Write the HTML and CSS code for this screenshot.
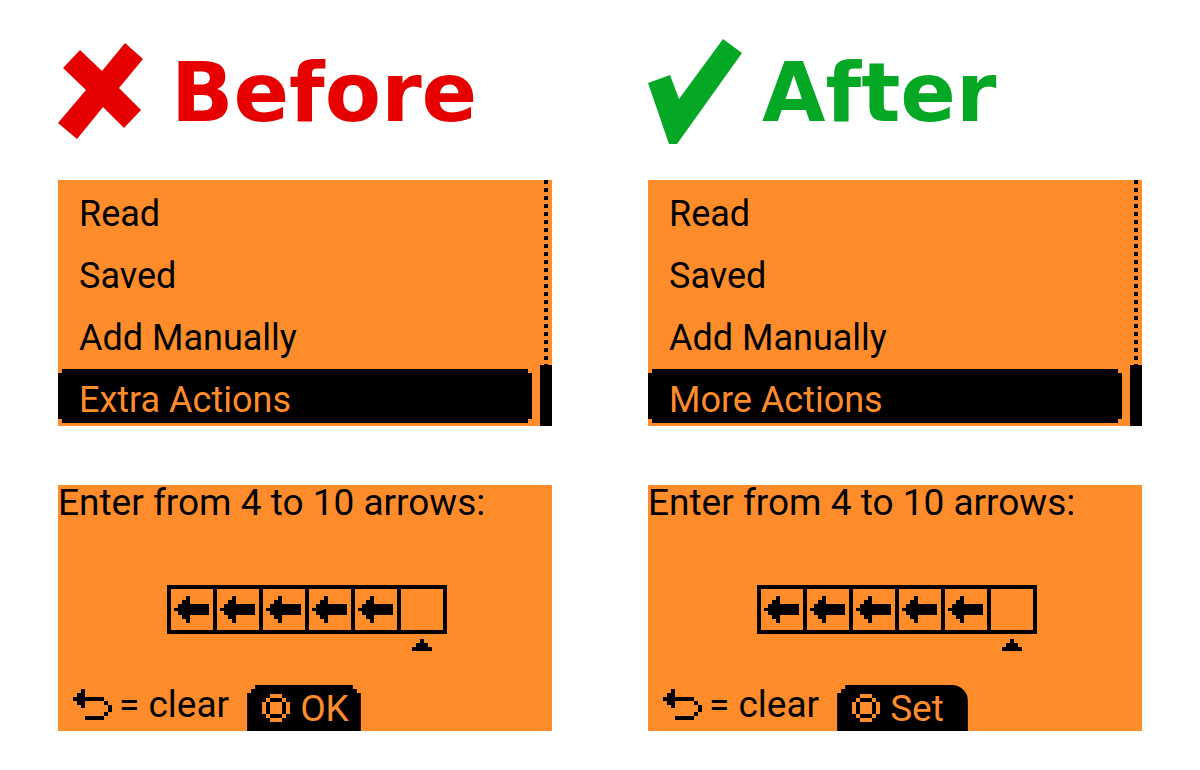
FILE: index.html
```html
<!DOCTYPE html>
<html lang="en">
    <head>
        <title>Before / After</title>
        <meta charset="UTF-8">
        <meta name="viewport" content="width=device-width, initial-scale=1">
        <link rel="stylesheet" href="styles.css">
    </head>
    <body>
        <!-- shared pixel icons, one unit = one display pixel -->
        <svg class="sprites" aria-hidden="true">
            <symbol id="arrow" viewBox="0 0 9 7">
                <path d="M0 3h1v-1h1v-1h1v-1h1v2h5v3h-5v2h-1v-1h-1v-1h-1v-1h-1z"/>
            </symbol>
            <symbol id="caret" viewBox="0 0 5 3">
                <path d="M2 0h1v1h1v1h1v1h-5v-1h1v-1h1z"/>
            </symbol>
            <symbol id="back" viewBox="0 0 10 8">
                <path d="M2 0h1v2h5v1h-5v2h-1v-1h-1v-1h-1v-1h1v-1h1zM8 3h1v1h-1zM9 4h1v2h-1zM8 6h1v1h-1zM3 7h5v1h-5z"/>
            </symbol>
            <symbol id="ok" viewBox="0 0 7 7">
                <path d="M2 0h3v1h-3zM1 1h1v1h-1zM5 1h1v1h-1zM0 2h1v3h-1zM6 2h1v3h-1zM1 5h1v1h-1zM5 5h1v1h-1zM2 6h3v1h-3zM2 2h3v3h-3z"/>
            </symbol>
        </svg>

        <main class="compare">
            <section class="column">
                <h1 class="title before">
                    <svg class="cross" viewBox="0 0 86 96" aria-hidden="true">
                        <path d="M22 7L44 28L67 0L85 16L61 45L83 67L66 85L45 64L19 96L0 80L28 47L5 25Z"/>
                    </svg>
                    <span>Before</span>
                </h1>

                <div class="screen menu">
                    <ul class="items">
                        <li>Read</li>
                        <li>Saved</li>
                        <li>Add Manually</li>
                        <li class="selected">Extra Actions</li>
                    </ul>
                    <div class="scrollbar"><div class="thumb"></div></div>
                </div>

                <div class="screen input">
                    <p class="prompt">Enter from 4 to 10 arrows:</p>
                    <div class="slots">
                        <div class="slot"><svg class="arrow"><use href="#arrow"/></svg></div>
                        <div class="slot"><svg class="arrow"><use href="#arrow"/></svg></div>
                        <div class="slot"><svg class="arrow"><use href="#arrow"/></svg></div>
                        <div class="slot"><svg class="arrow"><use href="#arrow"/></svg></div>
                        <div class="slot"><svg class="arrow"><use href="#arrow"/></svg></div>
                        <div class="slot"><svg class="caret"><use href="#caret"/></svg></div>
                    </div>
                    <div class="footer">
                        <svg class="back"><use href="#back"/></svg>
                        <span class="hint">= clear</span>
                        <button class="confirm" type="button"><svg class="ok"><use href="#ok"/></svg>OK</button>
                    </div>
                </div>
            </section>

            <section class="column">
                <h1 class="title after">
                    <svg class="check" viewBox="0 0 94 105" aria-hidden="true">
                        <path d="M0 44L22 36L31 60L75 0L94 14L29 105H21Z"/>
                    </svg>
                    <span>After</span>
                </h1>

                <div class="screen menu">
                    <ul class="items">
                        <li>Read</li>
                        <li>Saved</li>
                        <li>Add Manually</li>
                        <li class="selected">More Actions</li>
                    </ul>
                    <div class="scrollbar"><div class="thumb"></div></div>
                </div>

                <div class="screen input">
                    <p class="prompt">Enter from 4 to 10 arrows:</p>
                    <div class="slots">
                        <div class="slot"><svg class="arrow"><use href="#arrow"/></svg></div>
                        <div class="slot"><svg class="arrow"><use href="#arrow"/></svg></div>
                        <div class="slot"><svg class="arrow"><use href="#arrow"/></svg></div>
                        <div class="slot"><svg class="arrow"><use href="#arrow"/></svg></div>
                        <div class="slot"><svg class="arrow"><use href="#arrow"/></svg></div>
                        <div class="slot"><svg class="caret"><use href="#caret"/></svg></div>
                    </div>
                    <div class="footer">
                        <svg class="back"><use href="#back"/></svg>
                        <span class="hint">= clear</span>
                        <button class="confirm rounded" type="button"><svg class="ok"><use href="#ok"/></svg>Set</button>
                    </div>
                </div>
            </section>
        </main>
    </body>
</html>
```
FILE: styles.css
```css
body {
    margin: 0;
    background-color: white;
    color: black;
    font-family: Roboto, sans-serif;
    font-size: 37px;
}

svg {
    display: block;
    flex: none;
    fill: currentColor;
}

.sprites {
    display: none;
}

.compare {
    display: grid;
    grid-template-columns: 1fr 1fr;
    gap: 96px;
    padding: 35px 58px;
}

/* headings */

.title {
    display: flex;
    align-items: center;
    height: 112px;
    margin: 0 0 33px;
    font-family: "DejaVu Sans", sans-serif;
    font-size: 82px;
    font-weight: bold;
    line-height: 106px;
}

.title span {
    padding-top: 4px;
}

.before {
    gap: 27px;
    color: #e60000;
}

.after {
    gap: 20px;
    color: #04a824;
}

.cross {
    width: 86px;
    height: 96px;
}

.check {
    width: 94px;
    height: 105px;
}

/* device screens */

.screen {
    display: flex;
    min-height: 246px;
    background-color: #ff8c2b;
}

.menu {
    justify-content: space-between;
    gap: 8px;
    margin-bottom: 59px;
    font-size: 36px;
}

.items {
    display: flex;
    flex: 1;
    flex-direction: column;
    gap: 8px;
    margin: 0;
    padding: 3px 0;
    list-style: none;
    line-height: 46px;
}

.items li {
    padding: 8px 0 0 21px;
}

.selected {
    background-color: black;
    color: #ff8c2b;
    clip-path: polygon(4px 0, calc(100% - 4px) 0, calc(100% - 4px) 4px, 100% 4px, 100% calc(100% - 4px), calc(100% - 4px) calc(100% - 4px), calc(100% - 4px) 100%, 4px 100%, 4px calc(100% - 4px), 0 calc(100% - 4px), 0 4px, 4px 4px);
}

.scrollbar {
    display: flex;
    align-items: flex-end;
    width: 12px;
    background: repeating-linear-gradient(black 0 4px, #ff8c2b 4px 8px) center / 4px 100% no-repeat;
}

.thumb {
    width: 100%;
    height: 61px;
    background-color: black;
}

.input {
    flex-direction: column;
    align-items: center;
}

.prompt {
    align-self: stretch;
    margin: 0 0 64px;
    line-height: 36px;
}

.slots {
    display: flex;
    padding-left: 3px;
}

.slot {
    position: relative;
    display: flex;
    align-items: center;
    justify-content: center;
    box-sizing: border-box;
    width: 50px;
    height: 49px;
    border: 4px solid black;
}

.slot + .slot {
    margin-left: -4px;
}

.arrow {
    width: 35px;
    height: 27px;
    shape-rendering: crispEdges;
}

/* cursor under the slot being filled */
.caret {
    position: absolute;
    top: 50px;
    width: 20px;
    height: 12px;
    shape-rendering: crispEdges;
}

.footer {
    display: flex;
    align-self: stretch;
    align-items: flex-end;
    margin-top: auto;
    padding-left: 15px;
}

.back {
    width: 39px;
    height: 31px;
    margin-bottom: 11px;
    shape-rendering: crispEdges;
}

.hint {
    margin: 0 18px 4px 7px;
    line-height: 44px;
}

.confirm {
    display: flex;
    align-items: center;
    gap: 10px;
    height: 46px;
    padding: 0 12px 0 15px;
    border: none;
    background-color: black;
    color: #ff8c2b;
    font: inherit;
    clip-path: polygon(8px 0, calc(100% - 8px) 0, calc(100% - 8px) 4px, calc(100% - 4px) 4px, calc(100% - 4px) 8px, 100% 8px, 100% 100%, 0 100%, 0 8px, 4px 8px, 4px 4px, 8px 4px);
}

.rounded {
    padding-right: 24px;
    border-top-right-radius: 16px;
    clip-path: polygon(8px 0, 100% 0, 100% 100%, 0 100%, 0 8px, 4px 8px, 4px 4px, 8px 4px);
}

.ok {
    width: 28px;
    height: 28px;
    shape-rendering: crispEdges;
}
```
